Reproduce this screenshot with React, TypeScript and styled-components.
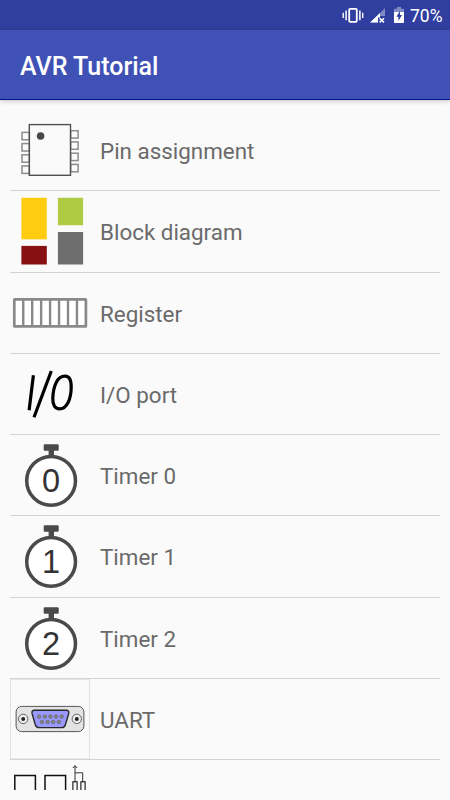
import React from "react";
import styled, { createGlobalStyle } from "styled-components";

const GlobalStyle = createGlobalStyle`
  * { box-sizing: border-box; }
  body { margin: 0; background: #fafafa; font-family: Roboto, "Noto Sans", sans-serif; }
`;

const Screen = styled.div`
  width: 450px;
  height: 800px;
  overflow: hidden;
  display: flex;
  flex-direction: column;
  background: #fafafa;
`;

const StatusBar = styled.header`
  height: 30px;
  flex: none;
  display: flex;
  justify-content: flex-end;
  align-items: center;
  padding-right: 7px;
  background: #303f9f;
  color: #fff;
`;

const StatusIcons = styled.svg`
  width: 69px;
  height: 30px;
  display: block;
`;

const Battery = styled.span`
  font-size: 17.5px;
  line-height: 30px;
  width: 33px;
  white-space: nowrap;
  padding-top: 2px;
`;

const AppBar = styled.div`
  height: 70px;
  flex: none;
  display: flex;
  align-items: center;
  padding: 4px 20px 0;
  background: #3f51b5;
  border-bottom: 1px solid #06108c;
  box-shadow: 0 1px 5px rgba(0, 0, 0, 0.22);
`;

const Title = styled.h1`
  margin: 0;
  font-size: 25px;
  font-weight: 500;
  line-height: 30px;
  color: #fff;
`;

const List = styled.ul`
  list-style: none;
  margin: 10px 10px 0;
  padding: 0;
  height: 680px;
  flex: none;
  overflow: hidden;
`;

const Row = styled.li`
  height: 81.25px;
  display: flex;
  align-items: flex-start;
  border-bottom: 1px solid #d3d3d3;
`;

const Icon = styled.svg`
  width: 80px;
  height: 80px;
  flex: none;
  display: block;
`;

const Label = styled.span`
  margin-left: 10px;
  line-height: 82.4px;
  font-size: 22.4px;
  color: #6a6a6a;
  white-space: nowrap;
`;

const Digit = styled.text`
  font-family: "Liberation Sans", Arial, sans-serif;
  font-size: 32.5px;
  text-anchor: middle;
  fill: #333;
`;

const ChipIcon = () => (
  <Icon viewBox="0 0 80 80" fill="none">
    <g stroke="#8c8c8c" strokeWidth="1.5">
      {[22.4, 33.6, 44.8, 56].map((y) => (
        <rect key={y} x="12" y={y} width="7.4" height="7.4" />
      ))}
      {[20.7, 31.9, 43.2, 54.4].map((y) => (
        <rect key={y} x="60.7" y={y} width="7.4" height="7.4" />
      ))}
    </g>
    <rect x="19.3" y="14.6" width="41.2" height="50.7" stroke="#505050" strokeWidth="1.4" />
    <circle cx="30.6" cy="26" r="3.8" fill="#484848" />
  </Icon>
);

const BlocksIcon = () => (
  <Icon viewBox="0 0 80 80">
    <rect x="11.4" y="6.75" width="25.4" height="41.6" fill="#ffcc11" />
    <rect x="11.4" y="54.9" width="25.4" height="18.6" fill="#871013" />
    <rect x="47.9" y="6.75" width="25.2" height="27.5" fill="#afca43" />
    <rect x="47.9" y="41" width="25.2" height="32.5" fill="#6e6e6e" />
  </Icon>
);

const RegisterIcon = () => (
  <Icon viewBox="0 0 80 80" fill="none" stroke="#898989" strokeWidth="2.7">
    <rect x="4.3" y="26.4" width="71.6" height="27" rx="0.5" fill="#fff" />
    {[1, 2, 3, 4, 5, 6, 7].map((i) => (
      <path key={i} d={`M${4.3 + i * 8.95} 26.4V53.4`} strokeWidth="2.4" />
    ))}
  </Icon>
);

const PortIcon = () => (
  <Icon viewBox="0 0 80 80" fill="none" stroke="#000" strokeWidth="3.2">
    <path d="M23.4 21.3L19.1 56.2M41.3 17L24 63.2" />
    <path d="M55 22.2C47.5 22.2 43.2 31.5 42.8 44.5C42.6 51.2 45 54.9 49.6 54.9C57 54.9 61 45 61.2 33.5C61.3 26 59.5 22.2 55 22.2Z" />
  </Icon>
);

const TimerIcon = ({ digit }: { digit: string }) => (
  <Icon viewBox="0 0 80 80">
    <rect x="38.6" y="13" width="5.4" height="8" fill="#4a4a4a" />
    <rect x="33.7" y="9.2" width="15" height="6.6" rx="1.2" fill="#4a4a4a" />
    <circle cx="41.1" cy="45.8" r="24.4" fill="#fff" stroke="#4a4a4a" strokeWidth="3.5" />
    <Digit x="41.1" y="56.8">{digit}</Digit>
  </Icon>
);

const SerialIcon = () => (
  <Icon viewBox="0 0 80 80">
    <rect x="0.5" y="0.3" width="79" height="79.5" fill="none" stroke="#e2e2e2" />
    <rect x="6.1" y="27.4" width="67.8" height="25.2" rx="5.5" fill="#e3e3e3" stroke="#555" />
    <path
      d="M24.5 31.3H56.3Q59.5 31.3 58.7 34.5L55.4 45.7Q54.5 48.6 51.8 48.6H29Q26.2 48.6 25.3 45.7L22.1 34.5Q21.3 31.3 24.5 31.3Z"
      fill="#9999ff"
      stroke="#292929"
      strokeWidth="1.4"
    />
    <g fill="#858585" stroke="#666" strokeWidth="0.7">
      {[29.1, 34.8, 40.4, 46, 51.7].map((x) => (
        <circle key={x} cx={x} cy="37.6" r="1.8" />
      ))}
      {[31.9, 37.6, 43.2, 48.8].map((x) => (
        <circle key={x} cx={x} cy="43" r="1.8" />
      ))}
    </g>
    {[13.2, 66.8].map((x) => (
      <g key={x}>
        <circle cx={x} cy="39.9" r="4.7" fill="#eee" stroke="#555" strokeWidth="0.9" />
        <circle cx={x} cy="39.9" r="2" fill="#222" />
      </g>
    ))}
  </Icon>
);

const BusIcon = () => (
  <Icon viewBox="0 0 80 80" fill="none" stroke="#111">
    <g strokeWidth="1.5">
      <rect x="4.8" y="15.5" width="20.6" height="30" />
      <rect x="35" y="15.5" width="20.6" height="30" />
    </g>
    <path d="M65 6V22M65 12.8H72.7V22M62.9 8L65 5.6L67.1 8" stroke="#333" />
    <rect x="62.9" y="21.8" width="4.2" height="20" strokeWidth="1.1" />
    <rect x="70.9" y="21.8" width="4.2" height="20" strokeWidth="1.1" />
  </Icon>
);

const items = [
  { id: "pins", label: "Pin assignment", icon: <ChipIcon /> },
  { id: "blocks", label: "Block diagram", icon: <BlocksIcon /> },
  { id: "register", label: "Register", icon: <RegisterIcon /> },
  { id: "port", label: "I/O port", icon: <PortIcon /> },
  { id: "timer0", label: "Timer 0", icon: <TimerIcon digit="0" /> },
  { id: "timer1", label: "Timer 1", icon: <TimerIcon digit="1" /> },
  { id: "timer2", label: "Timer 2", icon: <TimerIcon digit="2" /> },
  { id: "uart", label: "UART", icon: <SerialIcon /> },
  { id: "bus", label: "", icon: <BusIcon /> },
];

export default function App() {
  return (
    <Screen>
      <GlobalStyle />
      <StatusBar>
        <StatusIcons viewBox="341 0 69 30" fill="none">
          <rect x="349.2" y="8.8" width="7.6" height="13" rx="1" stroke="#fff" strokeWidth="1.8" />
          <path d="M346.1 10.5V20.3M359.9 10.5V20.3" stroke="#fff" strokeWidth="1.5" />
          <path d="M343.2 12.7V18M362.7 12.7V18" stroke="#fff" strokeWidth="1.4" />
          <path d="M385 8V16H378V22.5H370.5Z" fill="#7f89c4" />
          <path d="M380 13V17.5H378V22.5H370Z" fill="#fff" />
          <path d="M379.6 18.2L384 22.4M384 18.2L379.6 22.4" stroke="#fff" strokeWidth="1.5" />
          <path d="M397 7H401V8.8H404V12.5H394V8.8H397Z" fill="#7f89c4" />
          <path d="M394 12H404V22.3Q404 23 403.3 23H394.7Q394 23 394 22.3Z" fill="#fff" />
          <path d="M400 11L396.3 16.8H398.4V21L402 15H400Z" fill="#303f9f" />
        </StatusIcons>
        <Battery>70%</Battery>
      </StatusBar>
      <AppBar>
        <Title>AVR Tutorial</Title>
      </AppBar>
      <List>
        {items.map((item) => (
          <Row key={item.id}>
            {item.icon}
            <Label>{item.label}</Label>
          </Row>
        ))}
      </List>
    </Screen>
  );
}
